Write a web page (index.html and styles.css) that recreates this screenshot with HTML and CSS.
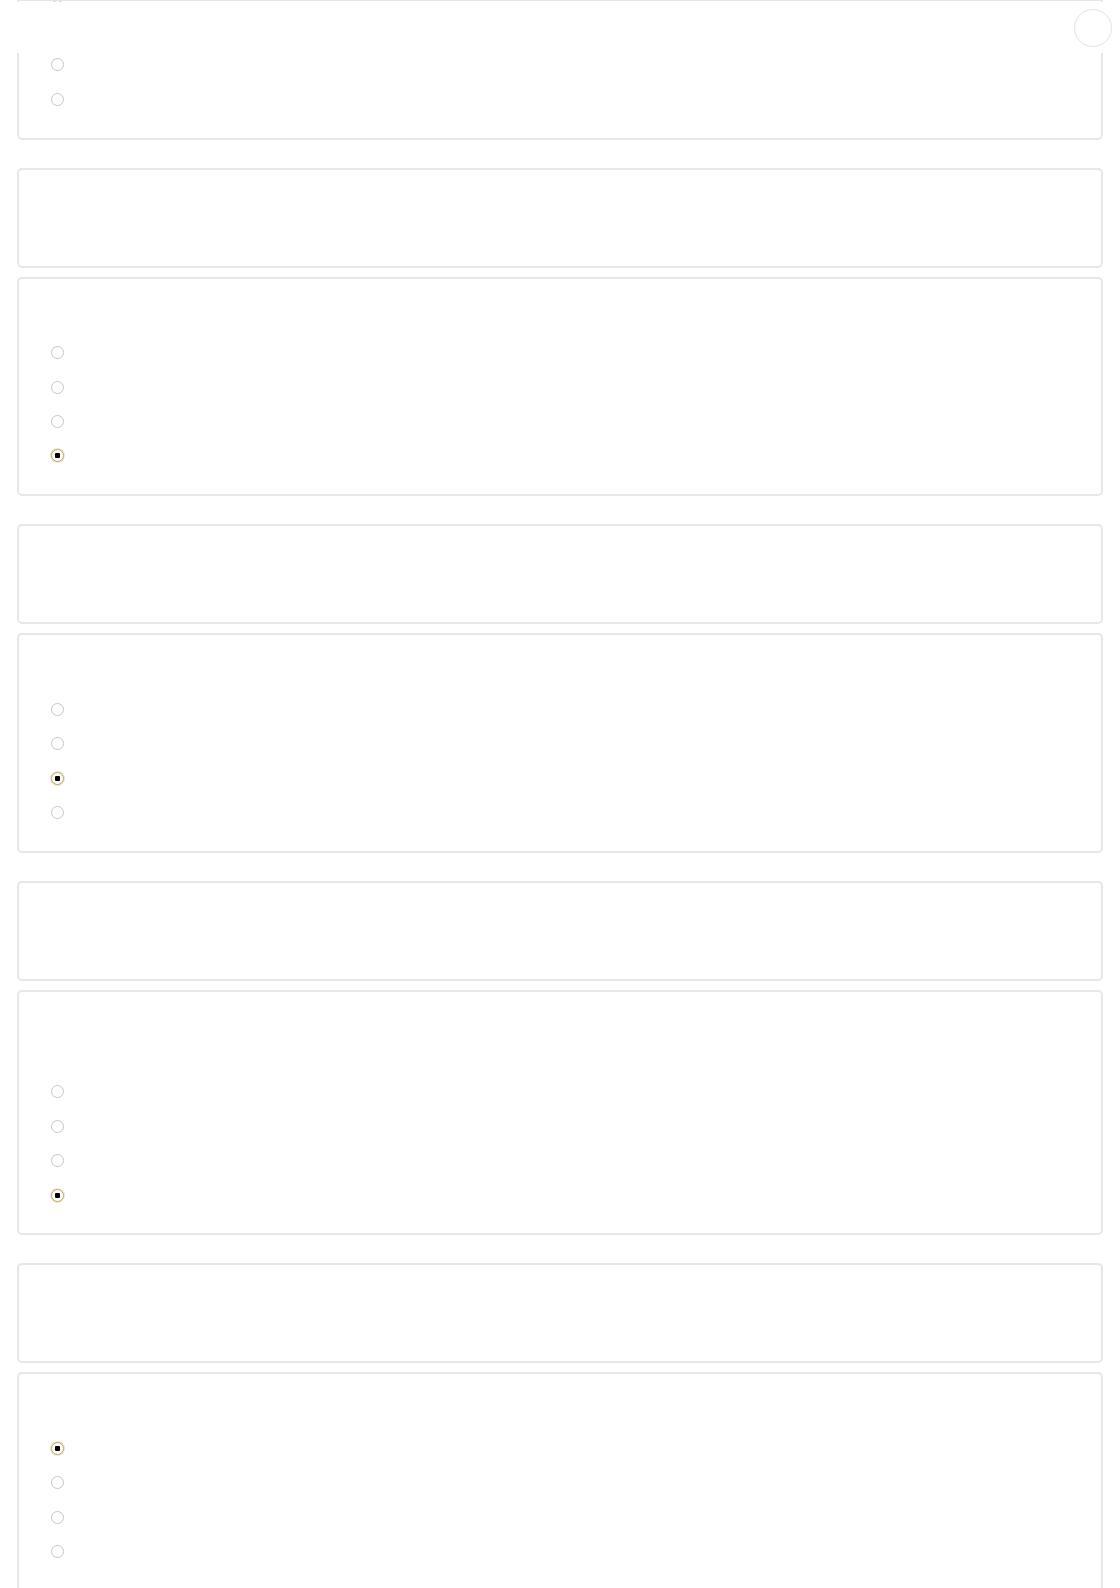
FILE: index.html
```html
<!DOCTYPE html>
<html lang="en">
<head>
<meta charset="utf-8">
<title>Quiz</title>
<link rel="stylesheet" href="styles.css">
</head>
<body>
<header class="topbar">
  <div class="topbar-line"></div>
  <div class="avatar"></div>
</header>
<main class="quiz">
  <section class="card question first">
    <div class="q-text"></div>
    <div class="options">
      <label class="opt"><input type="radio" name="q1"></label>
      <label class="opt"><input type="radio" name="q1"></label>
      <label class="opt"><input type="radio" name="q1"></label>
      <label class="opt"><input type="radio" name="q1"></label>
    </div>
  </section>

  <section class="card short"></section>
  <section class="card question">
    <div class="q-text"></div>
    <div class="options">
      <label class="opt"><input type="radio" name="q2"></label>
      <label class="opt"><input type="radio" name="q2"></label>
      <label class="opt"><input type="radio" name="q2"></label>
      <label class="opt"><input type="radio" name="q2" checked></label>
    </div>
  </section>

  <section class="card short"></section>
  <section class="card question">
    <div class="q-text"></div>
    <div class="options">
      <label class="opt"><input type="radio" name="q3"></label>
      <label class="opt"><input type="radio" name="q3"></label>
      <label class="opt"><input type="radio" name="q3" checked></label>
      <label class="opt"><input type="radio" name="q3"></label>
    </div>
  </section>

  <section class="card short"></section>
  <section class="card question">
    <div class="q-text tall"></div>
    <div class="options">
      <label class="opt"><input type="radio" name="q4"></label>
      <label class="opt"><input type="radio" name="q4"></label>
      <label class="opt"><input type="radio" name="q4"></label>
      <label class="opt"><input type="radio" name="q4" checked></label>
    </div>
  </section>

  <section class="card short"></section>
  <section class="card question">
    <div class="q-text"></div>
    <div class="options">
      <label class="opt"><input type="radio" name="q5" checked></label>
      <label class="opt"><input type="radio" name="q5"></label>
      <label class="opt"><input type="radio" name="q5"></label>
      <label class="opt"><input type="radio" name="q5"></label>
    </div>
  </section>
</main>
</body>
</html>
```
FILE: styles.css
```css
html, body {
  margin: 0;
  padding: 0;
  background: #ffffff;
  font-family: "Liberation Sans", Arial, sans-serif;
  overflow: hidden;
}

.topbar {
  position: fixed;
  top: 2px;
  left: 0;
  right: 0;
  height: 51px;
  background: #ffffff;
  z-index: 10;
}

.topbar-line {
  position: absolute;
  top: -2px;
  left: 19px;
  right: 19px;
  height: 1px;
  background: #e6e6e6;
}

.avatar {
  position: absolute;
  top: 7px;
  right: 8px;
  width: 36px;
  height: 36px;
  border: 1px solid #e3e3e3;
  border-radius: 50%;
  background: #ffffff;
}

.quiz {
  display: flex;
  flex-direction: column;
  padding: 0 17px;
  margin-top: -80px;
}

.card {
  box-sizing: border-box;
  border: 2px solid #e7e7e7;
  border-radius: 5px;
  background: #ffffff;
}

.card.short {
  height: 100px;
  margin-top: 28px;
}

.card.question {
  margin-top: 9px;
  padding-bottom: 21px;
}

.card.question.first {
  margin-top: 0;
}

.q-text {
  height: 57px;
}

.q-text.tall {
  height: 83px;
}

.options {
  display: flex;
  flex-direction: column;
}

.opt {
  height: 34.4px;
  display: flex;
  align-items: center;
  padding-left: 32px;
}

.opt input {
  -webkit-appearance: none;
  appearance: none;
  margin: 0;
  width: 13px;
  height: 13px;
  box-sizing: border-box;
  border: 1px solid #c6c6c6;
  border-radius: 50%;
  background: #ffffff;
  display: grid;
  place-items: center;
}

.opt input:checked {
  border: 1px solid #bca56a;
  box-shadow: 0 0 0 1px #f0e6c9;
}

.opt input:checked::after {
  content: "";
  width: 5px;
  height: 5px;
  border-radius: 1px;
  background: #000000;
}
```
